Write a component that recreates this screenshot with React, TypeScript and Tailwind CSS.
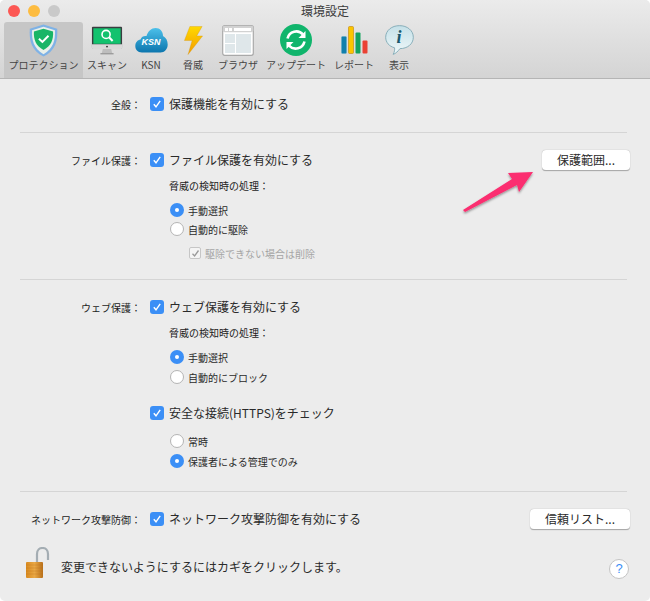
import React from "react";

const font = { fontFamily: '"Noto Sans CJK JP", "Noto Sans", sans-serif' };

function ShieldIcon() {
  return (
    <svg width="31" height="33" viewBox="0 0 34 36">
      <path d="M17 0.5 L32 5 C33 18 30 29 17 35.5 C4 29 1 18 2 5 Z" fill="#7fb2e6" />
      <path d="M17 3 L29.5 6.8 C30.2 18 27.5 27 17 33 C6.5 27 3.8 18 4.5 6.8 Z" fill="#e9f0ea" />
      <path d="M17 5 L27.5 8.2 C28 17 25.5 24 17 28.5 C8.5 24 6 17 6.5 8.2 Z" fill="#18b566" />
      <path d="M12 16 L15.8 19.6 L22.5 12.8" fill="none" stroke="#fff" strokeWidth="2.2" />
    </svg>
  );
}

function ScanIcon() {
  return (
    <svg width="32" height="29" viewBox="0 0 34 30">
      <rect x="1" y="0.5" width="32" height="23" rx="1" fill="#3a3d40" />
      <rect x="2.5" y="2" width="29" height="16.5" fill="#12c26e" />
      <path d="M1 19 H33 V23 Q33 24 32 24 H2 Q1 24 1 23 Z" fill="#d9d9d9" />
      <circle cx="17" cy="21.5" r="1" fill="#333" />
      <path d="M12.5 24 H21.5 L22.5 28.5 H11.5 Z" fill="#bdbdbd" />
      <rect x="10" y="28.5" width="14" height="1.2" fill="#8e8e8e" />
      <circle cx="16" cy="8.5" r="4.3" fill="none" stroke="#fff" strokeWidth="1.7" />
      <path d="M19.2 11.5 L23 15.5" stroke="#fff" strokeWidth="2.2" />
    </svg>
  );
}

function KsnIcon() {
  return (
    <div className="relative h-[26px] w-[33px]">
      <svg width="33" height="26" viewBox="0 0 33 26" className="absolute left-0 top-0">
        <defs>
          <linearGradient id="ksnCloud" x1="0" y1="0" x2="0" y2="1">
            <stop offset="0" stopColor="#4cc0ea" />
            <stop offset="1" stopColor="#0c76ae" />
          </linearGradient>
        </defs>
        <path
          d="M7 25.5 C2.5 25.5 0.3 22.5 0.3 19 C0.3 15.5 2.5 13 5.5 12.5 C6.5 9.5 9 8.5 11.5 9 C13 4 16.5 1 20.5 1 C25 1 28 4.5 28 9 C31 10.5 32.7 13.5 32.7 17.5 C32.7 22 29.5 25.5 25.5 25.5 Z"
          fill="url(#ksnCloud)"
        />
      </svg>
      <span className="absolute left-0 right-0 top-[10px] text-center text-[9px] leading-[10px] font-bold italic text-white" style={{ fontFamily: '"Liberation Sans", sans-serif' }}>
        KSN
      </span>
    </div>
  );
}

function BoltIcon() {
  return (
    <svg width="21" height="29" viewBox="0 0 22 32">
      <defs>
        <linearGradient id="bolt" x1="0" y1="0" x2="0" y2="1">
          <stop offset="0" stopColor="#ffd900" />
          <stop offset="1" stopColor="#f39a00" />
        </linearGradient>
      </defs>
      <path d="M7 0.5 H20.5 L14.5 11 H21 L5 31.5 L9.5 16 H1 Z" fill="url(#bolt)" stroke="#d99a10" strokeWidth="0.4" />
    </svg>
  );
}

function BrowserIcon() {
  return (
    <svg width="32" height="31" viewBox="0 0 32 31">
      <rect x="0.7" y="0.7" width="30.6" height="29.6" rx="2" fill="#fff" stroke="#a9a9a9" strokeWidth="1.2" />
      <rect x="0.7" y="0.7" width="30.6" height="6.5" rx="2" fill="#d2d2d2" />
      <rect x="3" y="3" width="3" height="3" fill="#fff" />
      <rect x="7" y="3" width="3" height="3" fill="#fff" />
      <rect x="12" y="3" width="17" height="3" fill="#fff" />
      <rect x="3" y="9" width="10" height="9" fill="#dfe7ea" />
      <rect x="3" y="19" width="10" height="9" fill="#dfe7ea" />
      <rect x="14" y="9" width="15" height="19" fill="#dfe7ea" />
    </svg>
  );
}

function UpdateIcon() {
  return (
    <svg width="32" height="32" viewBox="0 0 32 32">
      <circle cx="16" cy="16" r="16" fill="#10b56c" />
      <path d="M7.5 14.5 A9 9 0 0 1 23 10.5" fill="none" stroke="#fff" strokeWidth="2.6" />
      <path d="M25.5 7 V14 H18.5 Z" fill="#fff" />
      <path d="M24.5 17.5 A9 9 0 0 1 9 21.5" fill="none" stroke="#fff" strokeWidth="2.6" />
      <path d="M6.5 25 V18 H13.5 Z" fill="#fff" />
    </svg>
  );
}

function ReportIcon() {
  return (
    <svg width="27" height="28" viewBox="0 0 27 28">
      <rect x="0.5" y="10.5" width="5" height="17" rx="1" fill="#1180ac" stroke="#5aa7c6" strokeWidth="0.5" />
      <rect x="7.5" y="0.5" width="5" height="27" rx="1" fill="#fbc500" stroke="#c58f1a" strokeWidth="0.7" />
      <rect x="14.5" y="6.5" width="5" height="21" rx="1" fill="#13a35f" />
      <rect x="21.5" y="14.5" width="5" height="13" rx="1" fill="#ea4235" />
    </svg>
  );
}

function InfoIcon() {
  return (
    <div className="relative h-[30px] w-[31px]">
      <svg width="31" height="30" viewBox="0 0 32 33" className="absolute left-0 top-0">
        <defs>
          <linearGradient id="bubble" x1="0" y1="0" x2="0" y2="1">
            <stop offset="0" stopColor="#c4e0e8" />
            <stop offset="1" stopColor="#f0f8f9" />
          </linearGradient>
        </defs>
        <path
          d="M16 0.7 C24.5 0.7 31.2 6 31.2 13.5 C31.2 21 24.5 26 16.5 26 C14.5 28.5 12 31.5 9 32.3 C10.5 29.5 11 27 10.5 25 C4.5 23.5 0.8 19 0.8 13.5 C0.8 6 7.5 0.7 16 0.7 Z"
          fill="url(#bubble)"
          stroke="#7fa9b5"
          strokeWidth="1"
        />
      </svg>
      <span className="absolute left-0 right-0 top-[2px] text-center text-[18px] leading-[20px] font-bold italic text-[#19586e]" style={{ fontFamily: '"Liberation Serif", serif' }}>
        i
      </span>
    </div>
  );
}

function LockIcon() {
  return (
    <svg width="25" height="31" viewBox="0 0 25 31" className="mb-[9px] shrink-0">
      <defs>
        <linearGradient id="lockBody" x1="0" y1="0" x2="1" y2="0">
          <stop offset="0" stopColor="#d98a1f" />
          <stop offset="0.5" stopColor="#e9a845" />
          <stop offset="1" stopColor="#b9701a" />
        </linearGradient>
      </defs>
      <path d="M12 15 V7 C12 3 14.5 1 17.5 1 C20.5 1 23 3 23 7 V13" fill="none" stroke="#a4adb3" strokeWidth="2.2" />
      <rect x="1" y="15" width="17" height="16" rx="1" fill="url(#lockBody)" />
      <path d="M1 18 H18 M1 21 H18 M1 24 H18 M1 27 H18" stroke="#b8711c" strokeOpacity="0.45" strokeWidth="0.7" />
    </svg>
  );
}

const tabs = [
  { label: "プロテクション", w: "w-[79px]", icon: <ShieldIcon />, active: true },
  { label: "スキャン", w: "w-[48px]", icon: <ScanIcon /> },
  { label: "KSN", w: "w-[40px]", icon: <KsnIcon /> },
  { label: "脅威", w: "w-[44px]", icon: <BoltIcon /> },
  { label: "ブラウザ", w: "w-[46px]", icon: <BrowserIcon /> },
  { label: "アップデート", w: "w-[70px]", icon: <UpdateIcon /> },
  { label: "レポート", w: "w-[46px]", icon: <ReportIcon /> },
  { label: "表示", w: "w-[44px]", icon: <InfoIcon /> },
];

function Checkbox({ disabled }: { disabled?: boolean }) {
  if (disabled) {
    return (
      <span className="flex h-[12px] w-[12px] shrink-0 items-center justify-center rounded-[2px] border border-[#c6c6c6] bg-[#f4f4f4]">
        <svg width="9" height="9" viewBox="0 0 9 9">
          <path d="M1.5 4.8 L3.6 7 L7.5 1.5" fill="none" stroke="#9a9a9a" strokeWidth="1.3" />
        </svg>
      </span>
    );
  }
  return (
    <span className="flex h-[14px] w-[14px] shrink-0 items-center justify-center rounded-[3px] bg-[#3b8ff6]">
      <svg width="10" height="10" viewBox="0 0 10 10">
        <path d="M1.8 5.2 L4 7.8 L8.2 1.8" fill="none" stroke="#fff" strokeWidth="1.4" />
      </svg>
    </span>
  );
}

function Radio({ checked }: { checked?: boolean }) {
  if (checked) {
    return (
      <span className="flex h-[14px] w-[14px] shrink-0 items-center justify-center rounded-full bg-[#3b8ff6]">
        <span className="h-[4px] w-[4px] rounded-full bg-white" />
      </span>
    );
  }
  return <span className="h-[14px] w-[14px] shrink-0 rounded-full border border-[#b4b4b4] bg-white" />;
}

function Divider() {
  return <div className="mr-[23px] ml-[20px] h-px bg-[#d5d5d5]" />;
}

function CheckRow({ label, text, button }: { label?: string; text: string; button?: string }) {
  return (
    <div className="flex h-[20px] items-center pr-[20px]">
      <span className="w-[141px] shrink-0 text-right text-[10px] text-[#1c1c1c]">{label}</span>
      <span className="ml-[9px]">
        <Checkbox />
      </span>
      <span className="ml-[5px] text-[12px] text-[#2a2a2a]">{text}</span>
      {button && (
        <button className={`ml-auto h-[21px] rounded-[4px] border-b border-b-[#ababab] bg-white text-[12px] text-[#2a2a2a] shadow-[0_0_1px_#9a9a9a] ${button === "信頼リスト..." ? "w-[100px]" : "w-[88px]"}`}>
          {button}
        </button>
      )}
    </div>
  );
}

function RadioRow({ text, checked, mt }: { text: string; checked?: boolean; mt: string }) {
  return (
    <div className={`flex h-[20px] items-center gap-[4px] pl-[170px] ${mt}`}>
      <Radio checked={checked} />
      <span className="text-[10px] text-[#2a2a2a]">{text}</span>
    </div>
  );
}

function Caption({ text, mt }: { text: string; mt: string }) {
  return <div className={`h-[20px] pl-[169px] text-[10px] leading-[20px] text-[#1c1c1c] ${mt}`}>{text}</div>;
}

export default function App() {
  return (
    <div className="h-[601px] w-[650px] bg-white" style={font}>
      <div className="relative h-full overflow-hidden rounded-[5px] bg-[#ececec]">
        <div className="h-[79px] border-b border-[#b5b5b5] bg-gradient-to-b from-[#ebebeb] to-[#d4d4d4]">
          <div className="relative h-[22px] text-center text-[12px] leading-[21px] text-[#3c3c3c]">
            <div className="absolute top-[5px] left-[8px] flex gap-[8px]">
              <span className="h-[12px] w-[12px] rounded-full bg-[#fc5753]" />
              <span className="h-[12px] w-[12px] rounded-full bg-[#fdbc40]" />
              <span className="h-[12px] w-[12px] rounded-full bg-[#c9c9c9]" />
            </div>
            環境設定
          </div>
          <div className="flex h-[56px] pl-[4px]">
            {tabs.map((t) => (
              <div
                key={t.label}
                className={`flex flex-col items-center rounded-t-[3px] ${t.w} ${t.active ? "bg-[#c6c6c6]" : ""}`}
              >
                <div className="flex h-[36px] items-center justify-center">{t.icon}</div>
                <span className="whitespace-nowrap text-[10px] leading-[14px] text-[#444]">{t.label}</span>
              </div>
            ))}
          </div>
        </div>

        <div className="pt-[15px]">
          <CheckRow label="全般：" text="保護機能を有効にする" />
        </div>
        <div className="mt-[18px]">
          <Divider />
        </div>

        <div className="pt-[17px]">
          <CheckRow label="ファイル保護：" text="ファイル保護を有効にする" button="保護範囲..." />
          <Caption text="脅威の検知時の処理：" mt="mt-[6px]" />
          <RadioRow text="手動選択" checked mt="mt-[4px]" />
          <RadioRow text="自動的に駆除" mt="-mt-px" />
          <div className="mt-[4px] flex h-[20px] items-center gap-[4px] pl-[189px]">
            <Checkbox disabled />
            <span className="text-[10px] text-[#a5a5a5]">駆除できない場合は削除</span>
          </div>
        </div>
        <div className="mt-[16px]">
          <Divider />
        </div>

        <div className="pt-[17px]">
          <CheckRow label="ウェブ保護：" text="ウェブ保護を有効にする" />
          <Caption text="脅威の検知時の処理：" mt="mt-[6px]" />
          <RadioRow text="手動選択" checked mt="mt-[4px]" />
          <RadioRow text="自動的にブロック" mt="mt-0" />
          <div className="mt-[16px]">
            <CheckRow text="安全な接続(HTTPS)をチェック" />
          </div>
          <RadioRow text="常時" mt="mt-[8px]" />
          <RadioRow text="保護者による管理でのみ" checked mt="mt-0" />
        </div>
        <div className="mt-[20px]">
          <Divider />
        </div>

        <div className="pt-[17px]">
          <CheckRow label="ネットワーク攻撃防御：" text="ネットワーク攻撃防御を有効にする" button="信頼リスト..." />
        </div>

        <div className="mt-[20px] flex h-[36px] items-center pr-[21px] pl-[25px]">
          <LockIcon />
          <span className="ml-[11px] text-[12px] text-[#2a2a2a]">変更できないようにするにはカギをクリックします。</span>
          <span className="mt-[4px] ml-auto flex h-[20px] w-[20px] items-center justify-center rounded-full border border-[#c4c4c4] bg-white text-[13px] font-medium text-[#3b8ff6]" style={{ fontFamily: '"Liberation Sans", sans-serif' }}>
            ?
          </span>
        </div>

        {/* annotation arrow added on top of the window */}
        <svg width="80" height="50" viewBox="0 0 80 50" className="absolute top-[167px] left-[459px]">
          <defs>
            <filter id="arrowShadow" x="-20%" y="-20%" width="140%" height="150%">
              <feDropShadow dx="0" dy="1.5" stdDeviation="1.2" floodColor="#000" floodOpacity="0.4" />
            </filter>
          </defs>
          <path d="M4 43 L53 12 L49 6 L74 5 L60 25 L58 18 L6 45 Z" fill="#fb2d6f" filter="url(#arrowShadow)" />
        </svg>
      </div>
    </div>
  );
}
